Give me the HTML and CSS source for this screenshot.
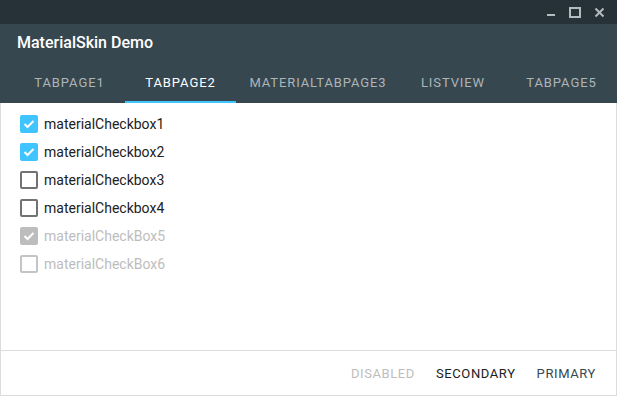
FILE: index.html
```html
<!DOCTYPE html>
<html lang="en">
<head>
    <meta charset="UTF-8">
    <meta name="viewport" content="width=device-width, initial-scale=1.0">
    <title>MaterialSkin Demo</title>
    <link rel="stylesheet" href="styles.css">
</head>
<body>
    <div class="ventana">
        <div class="barra-titulo">
            <span class="control">
                <svg width="10" height="10" viewBox="0 0 10 10"><rect x="1" y="7" width="8" height="2" fill="#b4bcc0"/></svg>
            </span>
            <span class="control">
                <svg width="12" height="11" viewBox="0 0 12 11"><rect x="1" y="1" width="10" height="9" fill="none" stroke="#b4bcc0" stroke-width="2"/></svg>
            </span>
            <span class="control">
                <svg width="11" height="11" viewBox="0 0 11 11"><path d="M1.5 1.5 L9.5 9.5 M9.5 1.5 L1.5 9.5" stroke="#b4bcc0" stroke-width="2"/></svg>
            </span>
        </div>
        <header class="cabecera">
            <h1 class="titulo">MaterialSkin Demo</h1>
            <nav class="tabs">
                <div class="tab tab1">TABPAGE1</div>
                <div class="tab tab2 activa">TABPAGE2</div>
                <div class="tab tab3">MATERIALTABPAGE3</div>
                <div class="tab tab4">LISTVIEW</div>
                <div class="tab tab5">TABPAGE5</div>
            </nav>
        </header>
        <main class="contenido">
            <div class="lista">
                <label class="check">
                    <span class="caja marcada"><svg width="12" height="10" viewBox="0 0 12 10"><path d="M1.5 5 L4.5 8 L10.5 2" fill="none" stroke="#fff" stroke-width="2"/></svg></span>
                    materialCheckbox1
                </label>
                <label class="check">
                    <span class="caja marcada"><svg width="12" height="10" viewBox="0 0 12 10"><path d="M1.5 5 L4.5 8 L10.5 2" fill="none" stroke="#fff" stroke-width="2"/></svg></span>
                    materialCheckbox2
                </label>
                <label class="check">
                    <span class="caja"></span>
                    materialCheckbox3
                </label>
                <label class="check">
                    <span class="caja"></span>
                    materialCheckbox4
                </label>
                <label class="check deshabilitado">
                    <span class="caja marcada"><svg width="12" height="10" viewBox="0 0 12 10"><path d="M1.5 5 L4.5 8 L10.5 2" fill="none" stroke="#fff" stroke-width="2"/></svg></span>
                    materialCheckBox5
                </label>
                <label class="check deshabilitado">
                    <span class="caja"></span>
                    materialCheckBox6
                </label>
            </div>
            <footer class="acciones">
                <button class="boton desactivado">DISABLED</button>
                <button class="boton secundario">SECONDARY</button>
                <button class="boton primario">PRIMARY</button>
            </footer>
        </main>
    </div>
</body>
</html>
```

FILE: styles.css
```css
body {
    font-family: Roboto, "Liberation Sans", sans-serif;
    margin: 0;
    padding: 0;
    background-color: #fff;
}
.ventana {
    width: 617px;
    height: 396px;
    display: flex;
    flex-direction: column;
}
.barra-titulo {
    height: 24px;
    background-color: #263238;
    display: flex;
    justify-content: flex-end;
    align-items: center;
    padding-right: 12px;
    gap: 12px;
}
.control {
    width: 12px;
    height: 12px;
    display: flex;
    align-items: center;
    justify-content: center;
}
.cabecera {
    background-color: #37474f;
    height: 79px;
    display: flex;
    flex-direction: column;
}
.titulo {
    margin: 0;
    height: 38px;
    padding-left: 17px;
    font-size: 16px;
    font-weight: 500;
    color: #fff;
    line-height: 38px;
}
.tabs {
    display: flex;
    padding-left: 14px;
    height: 41px;
}
.tab {
    box-sizing: border-box;
    font-size: 13px;
    font-weight: 400;
    letter-spacing: 0.9px;
    color: #adb5b9;
    display: flex;
    align-items: center;
    justify-content: center;
    border-bottom: 2px solid transparent;
    padding-top: 2px;
}
.tab1, .tab2 { width: 111px; }
.tab3 { width: 164px; }
.tab4 { width: 106px; }
.tab5 { width: 111px; }
.tab.activa {
    color: #fff;
    border-bottom-color: #40c4ff;
}
.contenido {
    flex: 1;
    display: flex;
    flex-direction: column;
    border: 1px solid #dcdcdc;
    border-top: none;
}
.lista {
    flex: 1;
    padding: 7px 0 0 19px;
}
.check {
    height: 28px;
    display: flex;
    align-items: center;
    gap: 6px;
    font-size: 14px;
    color: #212121;
}
.caja {
    box-sizing: border-box;
    width: 18px;
    height: 18px;
    border: 2px solid #727272;
    border-radius: 2px;
    display: flex;
    align-items: center;
    justify-content: center;
}
.caja.marcada {
    background-color: #40c4ff;
    border-color: #40c4ff;
}
.deshabilitado {
    color: #bdbdbd;
}
.deshabilitado .caja {
    border-color: #c4c4c4;
}
.deshabilitado .caja.marcada {
    background-color: #bdbdbd;
    border-color: #bdbdbd;
}
.acciones {
    height: 44px;
    border-top: 1px solid #dcdcdc;
    display: flex;
    justify-content: flex-end;
    align-items: center;
    padding-right: 14px;
    gap: 9px;
}
.boton {
    font-family: Roboto, "Liberation Sans", sans-serif;
    font-size: 13px;
    font-weight: 400;
    letter-spacing: 0.6px;
    background: none;
    border: none;
    padding: 8px 6px;
    cursor: pointer;
}
.desactivado { color: #bdbdbd; }
.secundario { color: #212121; }
.primario { color: #37474f; }
```
